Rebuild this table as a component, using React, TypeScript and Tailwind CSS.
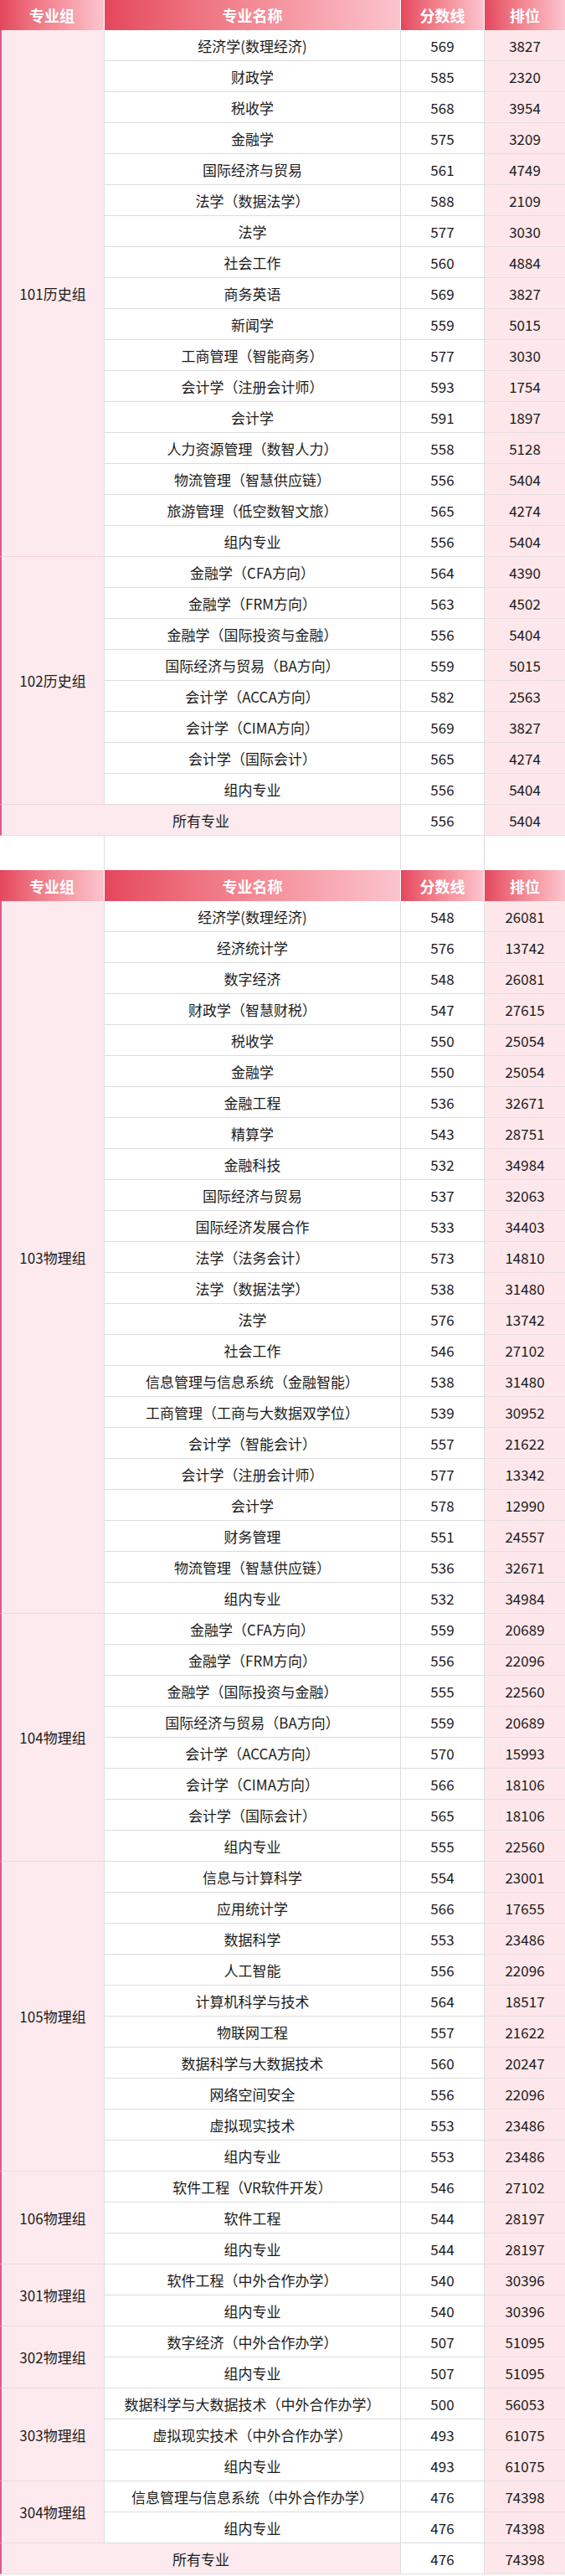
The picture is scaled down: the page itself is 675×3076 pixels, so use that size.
import React from "react";

type Row = [string, number, number];
type Group = { name: string; rows: Row[] };

const t1: Group[] = [
  {
    name: "101历史组",
    rows: [
      ["经济学(数理经济)", 569, 3827],
      ["财政学", 585, 2320],
      ["税收学", 568, 3954],
      ["金融学", 575, 3209],
      ["国际经济与贸易", 561, 4749],
      ["法学（数据法学）", 588, 2109],
      ["法学", 577, 3030],
      ["社会工作", 560, 4884],
      ["商务英语", 569, 3827],
      ["新闻学", 559, 5015],
      ["工商管理（智能商务）", 577, 3030],
      ["会计学（注册会计师）", 593, 1754],
      ["会计学", 591, 1897],
      ["人力资源管理（数智人力）", 558, 5128],
      ["物流管理（智慧供应链）", 556, 5404],
      ["旅游管理（低空数智文旅）", 565, 4274],
      ["组内专业", 556, 5404],
    ],
  },
  {
    name: "102历史组",
    rows: [
      ["金融学（CFA方向）", 564, 4390],
      ["金融学（FRM方向）", 563, 4502],
      ["金融学（国际投资与金融）", 556, 5404],
      ["国际经济与贸易（BA方向）", 559, 5015],
      ["会计学（ACCA方向）", 582, 2563],
      ["会计学（CIMA方向）", 569, 3827],
      ["会计学（国际会计）", 565, 4274],
      ["组内专业", 556, 5404],
    ],
  },
];

const t2: Group[] = [
  {
    name: "103物理组",
    rows: [
      ["经济学(数理经济)", 548, 26081],
      ["经济统计学", 576, 13742],
      ["数字经济", 548, 26081],
      ["财政学（智慧财税）", 547, 27615],
      ["税收学", 550, 25054],
      ["金融学", 550, 25054],
      ["金融工程", 536, 32671],
      ["精算学", 543, 28751],
      ["金融科技", 532, 34984],
      ["国际经济与贸易", 537, 32063],
      ["国际经济发展合作", 533, 34403],
      ["法学（法务会计）", 573, 14810],
      ["法学（数据法学）", 538, 31480],
      ["法学", 576, 13742],
      ["社会工作", 546, 27102],
      ["信息管理与信息系统（金融智能）", 538, 31480],
      ["工商管理（工商与大数据双学位）", 539, 30952],
      ["会计学（智能会计）", 557, 21622],
      ["会计学（注册会计师）", 577, 13342],
      ["会计学", 578, 12990],
      ["财务管理", 551, 24557],
      ["物流管理（智慧供应链）", 536, 32671],
      ["组内专业", 532, 34984],
    ],
  },
  {
    name: "104物理组",
    rows: [
      ["金融学（CFA方向）", 559, 20689],
      ["金融学（FRM方向）", 556, 22096],
      ["金融学（国际投资与金融）", 555, 22560],
      ["国际经济与贸易（BA方向）", 559, 20689],
      ["会计学（ACCA方向）", 570, 15993],
      ["会计学（CIMA方向）", 566, 18106],
      ["会计学（国际会计）", 565, 18106],
      ["组内专业", 555, 22560],
    ],
  },
  {
    name: "105物理组",
    rows: [
      ["信息与计算科学", 554, 23001],
      ["应用统计学", 566, 17655],
      ["数据科学", 553, 23486],
      ["人工智能", 556, 22096],
      ["计算机科学与技术", 564, 18517],
      ["物联网工程", 557, 21622],
      ["数据科学与大数据技术", 560, 20247],
      ["网络空间安全", 556, 22096],
      ["虚拟现实技术", 553, 23486],
      ["组内专业", 553, 23486],
    ],
  },
  {
    name: "106物理组",
    rows: [
      ["软件工程（VR软件开发）", 546, 27102],
      ["软件工程", 544, 28197],
      ["组内专业", 544, 28197],
    ],
  },
  {
    name: "301物理组",
    rows: [
      ["软件工程（中外合作办学）", 540, 30396],
      ["组内专业", 540, 30396],
    ],
  },
  {
    name: "302物理组",
    rows: [
      ["数字经济（中外合作办学）", 507, 51095],
      ["组内专业", 507, 51095],
    ],
  },
  {
    name: "303物理组",
    rows: [
      ["数据科学与大数据技术（中外合作办学）", 500, 56053],
      ["虚拟现实技术（中外合作办学）", 493, 61075],
      ["组内专业", 493, 61075],
    ],
  },
  {
    name: "304物理组",
    rows: [
      ["信息管理与信息系统（中外合作办学）", 476, 74398],
      ["组内专业", 476, 74398],
    ],
  },
];

const th =
  "p-0 text-center align-middle text-white font-bold text-[18px] bg-linear-to-r from-[#e4465e] to-[#fbc4ce] border-r border-white last:border-r-0";
const td = "p-0 h-[37px] text-center align-middle border-b border-r border-[#dddddd] bg-white";
const tdPink = "p-0 h-[37px] text-center align-middle border-b border-[#e6dde0] bg-[#fde7eb]";
const groupTd =
  "p-0 text-center align-middle border-b border-[#f2d6dd] border-r border-r-[#dddddd] border-l-2 border-l-[#dc5b8d] bg-[#fdeaee]";

function Header({ h }: { h: string }) {
  return (
    <tr className={h}>
      <th className={th}>专业组</th>
      <th className={th}>专业名称</th>
      <th className={th}>分数线</th>
      <th className={th}>排位</th>
    </tr>
  );
}

function Body({ groups, total }: { groups: Group[]; total: [number, number] }) {
  return (
    <>
      {groups.map((g) =>
        g.rows.map((r, i) => (
          <tr key={g.name + i} className="h-[37px]">
            {i === 0 && (
              <td rowSpan={g.rows.length} className={groupTd}>
                {g.name}
              </td>
            )}
            <td className={td}>{r[0]}</td>
            <td className={td}>{r[1]}</td>
            <td className={tdPink}>{r[2]}</td>
          </tr>
        ))
      )}
      <tr className="h-[37px]">
        <td colSpan={2} className={groupTd + " h-[37px]"}>
          所有专业
        </td>
        <td className={td}>{total[0]}</td>
        <td className={tdPink}>{total[1]}</td>
      </tr>
    </>
  );
}

export default function App() {
  return (
    <div
      className="w-[675px] bg-white text-[#1b1b1b] text-[17px] leading-none"
      style={{ fontFamily: '"Noto Sans CJK SC", "Noto Sans", sans-serif' }}
    >
      <table className="w-[675px] table-fixed border-separate border-spacing-0">
        <colgroup>
          <col className="w-[125px]" />
          <col className="w-[354px]" />
          <col className="w-[100px]" />
          <col className="w-[96px]" />
        </colgroup>
        <thead>
          <Header h="h-[36px]" />
        </thead>
        <tbody>
          <Body groups={t1} total={[556, 5404]} />
          <tr className="h-[41px]">
            <td className="p-0 border-r border-[#dddddd]"></td>
            <td className="p-0 border-r border-[#dddddd]"></td>
            <td className="p-0 border-r border-[#dddddd]"></td>
            <td className="p-0"></td>
          </tr>
          <Header h="h-[37px]" />
          <Body groups={t2} total={[476, 74398]} />
        </tbody>
      </table>
    </div>
  );
}
